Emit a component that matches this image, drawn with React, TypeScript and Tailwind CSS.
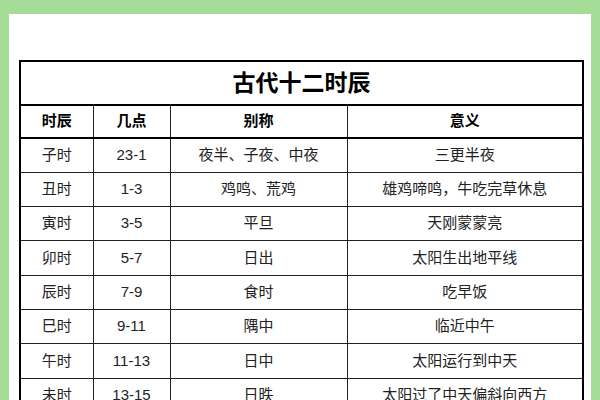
const rows: [string, string, string, string][] = [
  ["子时", "23-1", "夜半、子夜、中夜", "三更半夜"],
  ["丑时", "1-3", "鸡鸣、荒鸡", "雄鸡啼鸣，牛吃完草休息"],
  ["寅时", "3-5", "平旦", "天刚蒙蒙亮"],
  ["卯时", "5-7", "日出", "太阳生出地平线"],
  ["辰时", "7-9", "食时", "吃早饭"],
  ["巳时", "9-11", "隅中", "临近中午"],
  ["午时", "11-13", "日中", "太阳运行到中天"],
  ["未时", "13-15", "日昳", "太阳过了中天偏斜向西方"],
];

export default function App() {
  return (
    <div
      className="w-[600px] h-[400px] overflow-hidden bg-[#a4dc98] pl-[9px] pt-[14px]"
      style={{ fontFamily: '"Liberation Sans", "Noto Sans CJK SC", sans-serif' }}
    >
      <div className="w-[582px] h-[400px] bg-white pl-[10px] pt-[46px]">
        <table className="w-[565px] border-collapse border-[2.5px] border-black text-[#222] table-fixed">
          <colgroup>
            <col className="w-[73px]" />
            <col className="w-[77px]" />
            <col className="w-[177px]" />
            <col />
          </colgroup>
          <thead>
            <tr>
              <th colSpan={4} className="h-[44px] border-b-2 border-black text-[23px] font-bold text-black">
                古代十二时辰
              </th>
            </tr>
            <tr>
              {["时辰", "几点", "别称", "意义"].map((h) => (
                <th key={h} className="h-[33px] border border-[#222] border-b-2 border-b-black text-[15px] font-bold text-black">
                  {h}
                </th>
              ))}
            </tr>
          </thead>
          <tbody>
            {rows.map((r) => (
              <tr key={r[0]}>
                {r.map((c, i) => (
                  <td key={i} className="h-[34.3px] border border-[#222] text-center text-[15px]">
                    {c}
                  </td>
                ))}
              </tr>
            ))}
          </tbody>
        </table>
      </div>
    </div>
  );
}
